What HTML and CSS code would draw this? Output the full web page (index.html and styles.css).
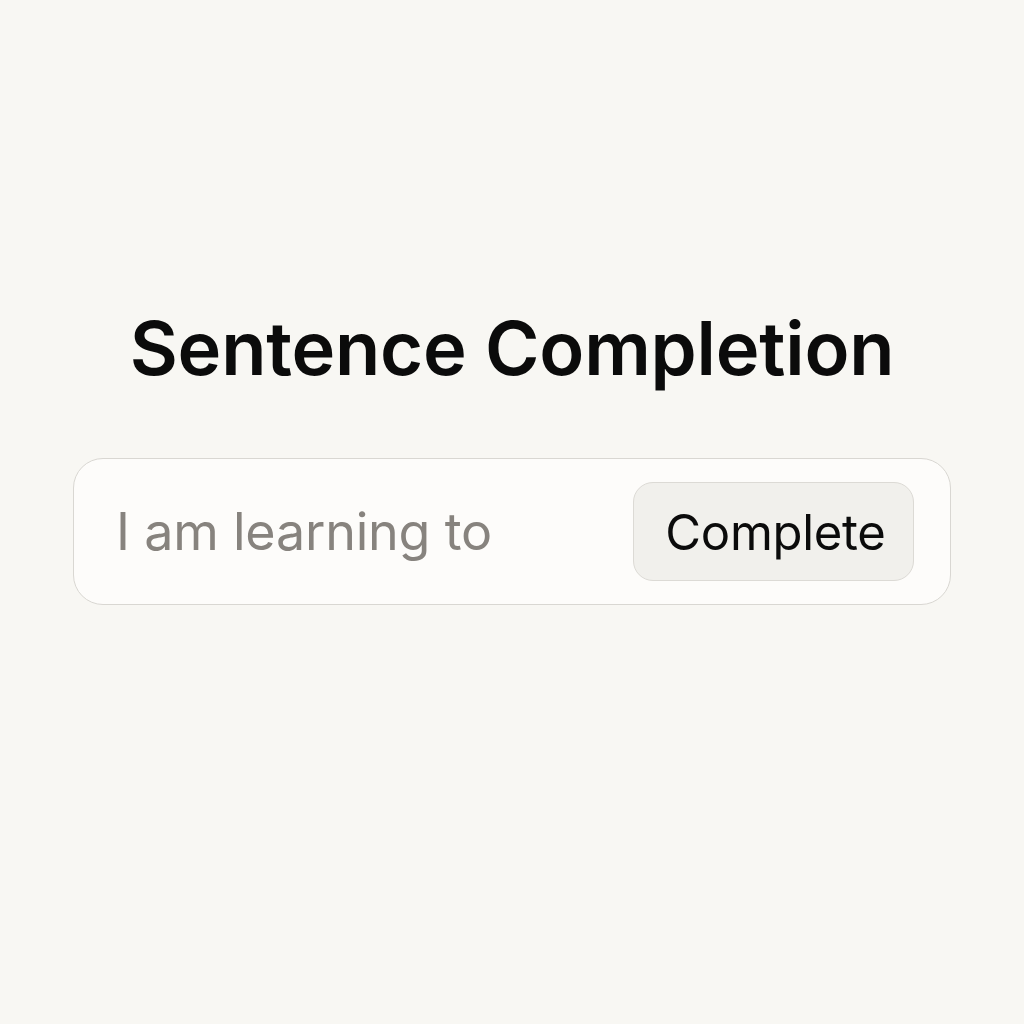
FILE: index.html
```html
<!DOCTYPE html>
<html lang="en">
<head>
<meta charset="utf-8">
<title>Sentence Completion</title>
<link rel="stylesheet" href="styles.css">
</head>
<body>
<main class="page">
  <h1 class="title">Sentence Completion</h1>
  <form class="bar">
    <input class="field" type="text" placeholder="I am learning to">
    <button class="btn" type="button">Complete</button>
  </form>
</main>
</body>
</html>
```
FILE: styles.css
```css
html, body {
  margin: 0;
  padding: 0;
  background: #f8f7f3;
}
.page {
  display: flex;
  flex-direction: column;
  align-items: center;
  padding-top: 303px;
  font-family: Inter, "Liberation Sans", sans-serif;
}
.title {
  margin: 0;
  font-size: 74px;
  font-weight: 600;
  line-height: 90px;
  color: #0b0b0b;
  letter-spacing: -0.2px;
}
.bar {
  margin-top: 65px;
  box-sizing: border-box;
  width: 878px;
  height: 147px;
  display: flex;
  align-items: center;
  padding: 0 36px 0 42px;
  background: #fdfcfa;
  border: 1.5px solid #d9d7d2;
  border-radius: 30px;
}
.field {
  flex: 1;
  min-width: 0;
  border: none;
  outline: none;
  background: transparent;
  font-family: Inter, "Liberation Sans", sans-serif;
  font-size: 52px;
  letter-spacing: -0.2px;
  color: #222;
  padding: 0;
}
.field::placeholder {
  color: #87837e;
}
.btn {
  width: 281px;
  height: 99px;
  box-sizing: border-box;
  background: #f1f0ec;
  border: 1.5px solid #dcdad5;
  border-radius: 20px;
  font-family: Inter, "Liberation Sans", sans-serif;
  font-size: 49px;
  letter-spacing: -0.3px;
  color: #0b0b0b;
  padding: 2px 0 0 4px;
}
```
